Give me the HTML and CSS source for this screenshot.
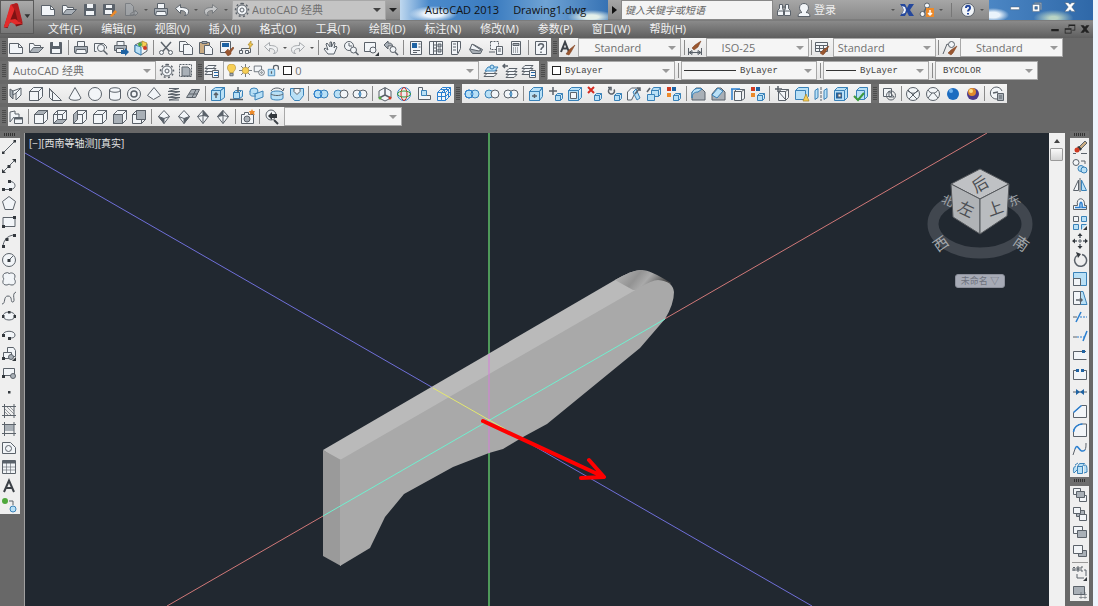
FILE: index.html
```html
<!DOCTYPE html>
<html lang="zh-CN">
<head>
<meta charset="utf-8">
<meta name="viewport" content="width=device-width, initial-scale=1">
<title>AutoCAD 2013 Drawing1.dwg</title>
<link rel="stylesheet" href="styles.css">
</head>
<body>
<svg class="sprite" aria-hidden="true">
<symbol id="new" viewBox="0 0 16 16"><path class="w" d="M1.5 3.5h9l4 4v6h-13z"/><path d="M10.500 3.500v4h4"/></symbol>
<symbol id="open" viewBox="0 0 16 16"><path class="w" d="M1.500 12.500v-9h4l1 2h6v2"/><path class="g" d="M1.500 12.500l4-5h10l-5 5z"/></symbol>
<symbol id="save" viewBox="0 0 16 16"><path class="d" d="M2.500 2.500h11v11h-11z"/><path class="w n" d="M5 2h6v4H5zM4 9h8v4H4z"/></symbol>
<symbol id="saveas" viewBox="0 0 16 16"><path class="d" d="M1.500 2.500h11v10h-11z"/><path class="w n" d="M4 3h6v3H4zM3 8h7v4H3z"/><path class="or" d="M8 14l5-6 2 2-5 5z"/></symbol>
<symbol id="export" viewBox="0 0 16 16"><path class="g" d="M2.500 1.500h5l3 3v9h-8z"/><path class="g" d="M7 14c0-3 2-4 5-4V8l3 3-3 3v-2c-2 0-3 0-5 2z"/></symbol>
<symbol id="print" viewBox="0 0 16 16"><path class="w" d="M4.500 1.500h7v5h-7z"/><path class="g" d="M1.500 6.500h13v6h-13z"/><path class="w" d="M3.500 9.500h9l1 4h-11z"/></symbol>
<symbol id="preview" viewBox="0 0 16 16"><path class="w" d="M3.500 11.500h-2v-8h9l3 3v2"/><circle class="w" cx="8" cy="8" r="3.500"/><path class="t" d="M10.500 10.500l4 4"/></symbol>
<symbol id="publish" viewBox="0 0 16 16"><path class="w" d="M4 1.500h7v4H4z"/><path class="g" d="M1.500 5.500h12v5h-12z"/><path class="w" d="M3.500 8.500h7v4h-7z"/><path class="bk" d="M8 10h4V8l4 4-4 4v-2H8z"/></symbol>
<symbol id="dwf" viewBox="0 0 16 16"><path class="w" d="M2 5l6-3 6 2v7l-6 4-6-3z"/><path class="b" d="M2 5l6 2v8l-6-3z"/><path class="yl" d="M9 1l5 2-1 3-4 1z"/><circle class="gn" cx="7" cy="4.500" r="2"/><circle class="rd" cx="12" cy="8" r="2"/></symbol>
<symbol id="cut" viewBox="0 0 16 16"><path class="t" d="M3 2l8 9M13 2L5 11"/><circle class="w" cx="3.500" cy="12.500" r="2"/><circle class="w" cx="12.500" cy="12.500" r="2"/></symbol>
<symbol id="copy" viewBox="0 0 16 16"><path class="w" d="M1.500 1.500h6l2 2v8h-8z"/><path class="w" d="M5.500 4.500h6l3 3v7h-9z"/></symbol>
<symbol id="paste" viewBox="0 0 16 16"><path class="tan" d="M1.500 2.500h10v11h-10z"/><path class="g" d="M4 1.500h5v2H4z"/><path class="w" d="M6.500 5.500h5l3 3v6h-8z"/></symbol>
<symbol id="match" viewBox="0 0 16 16"><path class="w" d="M2.500 1.500h10v11h-10z"/><path class="bk" d="M4 3h7v4H4z"/><path class="br" d="M7 12l3-3 1 2 4-4 1 1-3 4v2l-3 2z"/></symbol>
<symbol id="block" viewBox="0 0 16 16"><path d="M3.500 12.500v-4h9M8.500 12.500h4v-4"/><path class="w" d="M1.500 10.500h3v3h-3zM7.500 10.500h3v3h-3z"/><path class="yl" d="M13 1l-3 4h2l-1 4 4-5h-2z"/></symbol>
<symbol id="undo" viewBox="0 0 16 16"><path class="w" d="M1.500 6.500l5-4v3c5 0 8 1 8 4s-2 4-4 4c2-1 2-5-4-5v3z"/></symbol>
<symbol id="redo" viewBox="0 0 16 16"><path class="w" d="M14.500 6.500l-5-4v3c-5 0-8 1-8 4s2 4 4 4c-2-1-2-5 4-5v3z"/></symbol>
<symbol id="pan" viewBox="0 0 16 16"><path class="w" d="M5 14L1 9l1-1 3 2-2-6 1-1 3 4V2h1.500v5L11 2l1 1-1 5 2-2 1 1-3 7z"/></symbol>
<symbol id="zoomrt" viewBox="0 0 16 16"><circle class="w" cx="6" cy="6" r="4.500"/><path d="M6 3v3h3"/><circle class="w" cx="10.500" cy="10" r="3"/><path class="t" d="M12.500 12l3 3"/></symbol>
<symbol id="zoomwin" viewBox="0 0 16 16"><path class="w" d="M1.500 2.500h11v9h-11z"/><circle class="w" cx="10" cy="10" r="3"/><path class="k" d="M16 12v4h-4z"/></symbol>
<symbol id="zoomprev" viewBox="0 0 16 16"><path class="g" d="M1 5l4-4v2c4 0 4 1 5 4-2-2-3-1-5-1v3z"/><circle class="w" cx="10" cy="9.500" r="3"/><path class="t" d="M12 12l3 3"/></symbol>
<symbol id="props" viewBox="0 0 16 16"><path class="w" d="M2.500 1.500h11v13h-11z"/><path class="bk" d="M4 3h5v5H4z"/><path d="M10.500 4h2M10.500 7h2M5 10.500h7M5 12.500h4"/></symbol>
<symbol id="center" viewBox="0 0 16 16"><path class="w" d="M1.500 1.500h13v13h-13z"/><path d="M5.500 2v12M8.500 2v12M6 5h2M6 8h2M6 11h2"/><path class="g" d="M10 4h3v3h-3zM10 9h3v3h-3z"/></symbol>
<symbol id="palette" viewBox="0 0 16 16"><path class="w" d="M3.500 1.500h9v7l-3 6h-6z"/><path d="M9.500 2v11M5 4h3M5 7h3M5 10h3"/></symbol>
<symbol id="sheet" viewBox="0 0 16 16"><path class="g" d="M1.500 9.500l4-5 9 5-2 4h-8z"/><path class="w" d="M2 9l2-5 9 6-2 1z"/></symbol>
<symbol id="markup" viewBox="0 0 16 16"><path class="w" stroke-dasharray="2 1" d="M2.500 1.500h8v8h-8z"/><path class="w" d="M8.500 6.500h6v8h-6zM1 12h6"/><path d="M10 9h3M10 11h3"/></symbol>
<symbol id="calc" viewBox="0 0 16 16"><path class="w" d="M3.500 1.500h9v13h-9z"/><path class="g" d="M5 3.500h6v2H5z"/><path stroke-dasharray="1 1" d="M5 8h6M5 10h6M5 12h6"/></symbol>
<symbol id="help" viewBox="0 0 16 16"><path class="w" d="M2.500 1.500h11v13h-11z"/><path class="t" d="M5.500 6c0-3 5-3 5 0 0 2-2.500 1.500-2.500 4M8 11.500v1.500"/></symbol>
<symbol id="textstyle" viewBox="0 0 16 16"><path class="t2" d="M1 12L5 2l4 10M3 8.500h4"/><path class="br" d="M6 14l3-4 1-1 5-4-4 7-2 3z"/></symbol>
<symbol id="dimstyle" viewBox="0 0 16 16"><path d="M1.500 8v7M14.500 8v7M2 12.500h12M2 12.500l3-2v4zM14 12.500l-3-2v4z"/><path class="br" d="M5 8l3-3 6-4-3 6-4 3z"/></symbol>
<symbol id="tablestyle" viewBox="0 0 16 16"><path class="w" d="M1.500 2.500h12v9h-12z"/><path d="M2 5.500h11M2 8.500h11M5.500 5v6M9.500 5v6"/><path class="br" d="M6 13l3-3 6-4-4 7-2 2z"/></symbol>
<symbol id="leader" viewBox="0 0 16 16"><path d="M1 14L5 4l4 2"/><circle class="w" cx="9.500" cy="4.500" r="3"/><path class="br" d="M6 13l3-3 6-4-4 7-2 2z"/></symbol>
<symbol id="gear" viewBox="0 0 16 16"><circle class="w" cx="8" cy="8" r="5"/><circle cx="8" cy="8" r="2"/><path class="t" stroke-dasharray="2 2.300" d="M8 1.500a6.500 6.500 0 1 1-.01 0"/></symbol>
<symbol id="wssave" viewBox="0 0 16 16"><path stroke-dasharray="2 1" d="M1.500 1.500h12v12h-12z"/><path class="g" d="M4 4h6l2 2v7H4z"/></symbol>
<symbol id="layers" viewBox="0 0 16 16"><path class="w" d="M1 11.500l3-3h8l-3 3zM1 8.500l3-3h8l-3 3zM1 5.500l3-3h8l-3 3z"/><path class="w" d="M8.500 7.500h6v7h-6z"/><path class="bk" d="M10 9h4v1h-4zM10 12h4v1h-4z"/></symbol>
<symbol id="laycur" viewBox="0 0 16 16"><path class="w" d="M1 13.500l3-3h10l-3 3zM1 10.500l3-3h10l-3 3z"/><path class="b" d="M2 8l3-4h10l-3 4z"/><circle class="b" cx="9" cy="4" r="2"/></symbol>
<symbol id="layprev" viewBox="0 0 16 16"><path class="w" d="M4 14.500l3-3h8l-3 3zM4 11.500l3-3h8l-3 3zM4 8.500l3-3h8l-3 3z"/><path class="t" d="M6 3H1M3 1L1 3l2 2"/></symbol>
<symbol id="bulb" viewBox="0 0 16 16"><path class="yl" d="M6 11c0-2-3-3-3-6a5 5 0 0 1 10 0c0 3-3 4-3 6z"/><path class="g" d="M6 11.500h4v3H6z"/></symbol>
<symbol id="sun" viewBox="0 0 16 16"><path d="M8 0v16M0 8h16M2.500 2.500l11 11M13.500 2.500l-11 11"/><circle class="yl" cx="8" cy="8" r="4"/></symbol>
<symbol id="freeze" viewBox="0 0 16 16"><path class="w" d="M1.500 2.500h9v7h-9z"/><circle class="w" cx="10.500" cy="10.500" r="3.500"/><circle cx="10.500" cy="10.500" r="1"/></symbol>
<symbol id="lock" viewBox="0 0 16 16"><path class="b" d="M1.500 6.500h8v8h-8z"/><path class="t" d="M8 6V4c0-3 6-3 6 0v3M5.500 9v3"/></symbol>
<symbol id="polysolid" viewBox="0 0 16 16"><path class="g" d="M2 3l3 2v8l-3-3z"/><path class="w" d="M5 5l8-3v7l-5 5V7L5 9zM8 7l5-5"/></symbol>
<symbol id="box" viewBox="0 0 16 16"><path class="w" d="M1.500 5.500h9v9h-9zM1.500 5.500l4-4h9l-4 4zM10.500 5.500l4-4v9l-4 4z"/></symbol>
<symbol id="wedge" viewBox="0 0 16 16"><path class="w" d="M2.500 2.500v9l3 3h9z"/><path d="M2.500 2.500l3 4v8"/></symbol>
<symbol id="cone" viewBox="0 0 16 16"><path class="w" d="M8 1.500L2 12c1 3 11 3 12 0z"/></symbol>
<symbol id="sphere" viewBox="0 0 16 16"><circle class="w" cx="8" cy="8" r="6.500"/></symbol>
<symbol id="cylinder" viewBox="0 0 16 16"><path class="w" d="M2.500 4v8c0 3 11 3 11 0V4c0-3-11-3-11 0c0 3 11 3 11 0"/></symbol>
<symbol id="torus" viewBox="0 0 16 16"><circle class="w" cx="8" cy="8" r="6.500"/><circle class="t" cx="8" cy="8" r="3"/></symbol>
<symbol id="pyramid" viewBox="0 0 16 16"><path class="w" d="M8 1.500l-6.500 8 6 4 7-4z"/></symbol>
<symbol id="helix" viewBox="0 0 16 16"><path d="M3 2.500h10L2 5.500h12L2 8.500h12L2 11.500h12L3 14h10"/></symbol>
<symbol id="plane" viewBox="0 0 16 16"><path class="g" d="M1.500 11.500l5-8h8l-4 8z"/><path d="M4 8h8.500M7 11.500l4-8"/></symbol>
<symbol id="extrude" viewBox="0 0 16 16"><path class="b" d="M1.500 4.500h9v10h-9zM1.500 4.500l4-3h9l-4 3zM10.500 4.500l4-3v10l-4 3z"/><path class="t" d="M6 12V7M4 9l2-2 2 2"/></symbol>
<symbol id="presspull" viewBox="0 0 16 16"><path class="b" d="M4.500 6.500h6v6h-6zM4.500 6.500l2-2h6l-2 2zM10.500 12.500l3-2v-6"/><path class="t" d="M9 1v5M1 13.500h13"/></symbol>
<symbol id="sweep" viewBox="0 0 16 16"><ellipse class="b" cx="5" cy="5" rx="4" ry="3"/><path class="b" d="M6 8l8-3v6l-8 3zM1 5v3c0 3 5 2 6 2"/></symbol>
<symbol id="revolve" viewBox="0 0 16 16"><path class="b" d="M2 6.500c2-2 10-2 12 0v6c-2 2-10 2-12 0z"/><path d="M2 5c2-4 10-4 12 0M12 3l2 2 1-3M2 8c3 2 9 2 12 0"/></symbol>
<symbol id="loft" viewBox="0 0 16 16"><path class="b" d="M1.500 2.500h13v7l-4 5h-5l-4-5z"/><path class="w" d="M5 2.500v3l3 3 3-3v-3z"/></symbol>
<symbol id="union" viewBox="0 0 16 16"><circle class="b" cx="5" cy="8" r="4"/><circle class="b" cx="11" cy="8" r="4"/><circle class="nb" cx="5" cy="8" r="4"/></symbol>
<symbol id="subtract" viewBox="0 0 16 16"><circle class="b" cx="5" cy="8" r="4"/><circle class="w" cx="11" cy="8" r="4"/></symbol>
<symbol id="intersect" viewBox="0 0 16 16"><circle class="w" cx="5" cy="8" r="4"/><circle class="w" cx="11" cy="8" r="4"/><path class="b" d="M8 5.500a4 4 0 0 1 0 5a4 4 0 0 1 0-5"/></symbol>
<symbol id="gizmo" viewBox="0 0 16 16"><path class="w" d="M2 5l6-3.500L14 5v7l-6 3-6-3z"/><path class="t" d="M8 2v7M8 9l-6 3M8 9l6 3"/><circle class="rd" cx="13" cy="12" r="1.500"/><circle class="gn" cx="3" cy="12" r="1.500"/></symbol>
<symbol id="gizrot" viewBox="0 0 16 16"><circle class="nb" cx="8" cy="8" r="6.500"/><ellipse class="red" cx="8" cy="8" rx="3" ry="6.500"/><ellipse class="grn" cx="8" cy="8" rx="6.500" ry="3"/></symbol>
<symbol id="align3" viewBox="0 0 16 16"><path class="w" d="M2.500 1.500v12h12v-4h-8v-8z"/><path class="b" d="M5.500 4.500h5v5h-5z"/></symbol>
<symbol id="array3" viewBox="0 0 16 16"><path class="w nb" d="M1.500 6.500h4v4h-4zM5.500 6.500h4v4h-4zM1.500 10.500h4v4h-4zM5.500 10.500h4v4h-4zM4.500 3.500h4v3M8.500 3.500h4v4M1.500 6.500l3-3M5.500 6.500l3-3M9.500 6.500l3-3M9.500 10.500l3-3M9.500 14.500l3-3v-4M6.500 1.500h4v2M10.500 1.500h4v4l-2 2M4.500 3.500l2-2M12.500 3.500l2-2M12.500 11.500l2-2v-4"/></symbol>
<symbol id="plusbox" viewBox="0 0 16 16"><path class="b" d="M1.500 5.500h10v9h-10zM1.500 5.500l4-4h9l-3 4zM11.500 5.500l3-4v9l-3 4z"/><path class="t" d="M4 10h5M6.500 8v4"/></symbol>
<symbol id="movef" viewBox="0 0 16 16"><path class="t" d="M5 1v8M1 5h8"/><path class="b" d="M7.500 9.500h5v5h-5zM7.500 9.500l2-2h5l-2 2zM12.500 14.500l2-2v-5"/></symbol>
<symbol id="offsetf" viewBox="0 0 16 16"><path class="b" d="M1.500 4.500h10v10h-10zM1.500 4.500l3-3h10l-3 3zM11.500 14.500l3-3v-10"/><path class="w" d="M3.500 6.500h6v6h-6z"/></symbol>
<symbol id="delf" viewBox="0 0 16 16"><path class="red t2" d="M1 1l6 6M7 1L1 7"/><path class="b" d="M7.500 9.500h5v5h-5zM7.500 9.500l2-2h5l-2 2zM12.500 14.500l2-2v-5"/></symbol>
<symbol id="rotf" viewBox="0 0 16 16"><path class="t" d="M3 2.500a3 3 0 1 0 4 1M1 1.500h3v3"/><path class="b" d="M7.500 9.500h5v5h-5zM7.500 9.500l2-2h5l-2 2zM12.500 14.500l2-2v-5"/></symbol>
<symbol id="taperf" viewBox="0 0 16 16"><path class="w" d="M1.500 14V6l4-4h6l-6 12z"/><path class="b" d="M7 6l3-3 4 9-3 2z"/><path class="t" d="M9 8l5-6M11 2h3v3"/></symbol>
<symbol id="copyf" viewBox="0 0 16 16"><path class="b" d="M5.500 4.500h7v6h-7zM5.500 4.500l2-3h7l-2 3zM12.500 10.500l2-2v-7"/><path class="b" d="M1.500 8.500h7v6h-7z"/><path class="t" d="M1 6l3-4"/></symbol>
<symbol id="colorf" viewBox="0 0 16 16"><path class="rd" d="M1 1h4v4H1z"/><path class="bk" d="M6 1h4v4H6z"/><path class="or" d="M1 7h4v4H1z"/><path class="b" d="M7.500 9.500h5v5h-5zM7.500 9.500l2-2h5l-2 2zM12.500 14.500l2-2v-5"/></symbol>
<symbol id="fillete" viewBox="0 0 16 16"><path class="g" d="M2 6l4-4h5l4 4v8H2z"/><path class="b" d="M2 12c0-4 2-6 6-6l4-3c-6-2-11 1-10 7z"/></symbol>
<symbol id="chamfere" viewBox="0 0 16 16"><path class="g" d="M2 8l5-6h4l4 4v8H2z"/><path class="b" d="M2 9l6-7 5 3-6 7z"/></symbol>
<symbol id="copye" viewBox="0 0 16 16"><path class="w" d="M4.500 5.500h7v9h-7zM4.500 5.500l2-2h8l-3 2M11.500 14.500l3-2v-9"/><path class="nb t" d="M1 3h9M2 3v11"/></symbol>
<symbol id="imprint" viewBox="0 0 16 16"><path class="w" d="M4.500 5.500h7v9h-7zM4.500 5.500l3-2h7l-3 2M11.500 14.500l3-3v-8"/><path class="t" d="M1 3h7M4 0v6"/><path d="M4 5l7 8"/></symbol>
<symbol id="clean" viewBox="0 0 16 16"><path class="b" d="M1.500 4.500l3-3h10v9l-3 3h-10zM1.500 4.500h10v9"/><path class="yl" d="M9 15l3-7 3 7z"/></symbol>
<symbol id="separate" viewBox="0 0 16 16"><path class="b" d="M2 4.500l3-2v9l-3 2zM11 4.500l3-2v9l-3 2z"/><path stroke-dasharray="3 1" d="M8 1v14"/></symbol>
<symbol id="shell" viewBox="0 0 16 16"><path class="b" d="M1.500 4.500l3-3h10v10l-3 3h-10zM1.500 4.500h10v10M11.500 4.500l3-3"/><path class="bk" d="M3 6.500h6v6H3z"/><path class="w" d="M5 8h3v3H5z"/></symbol>
<symbol id="check" viewBox="0 0 16 16"><path class="b" d="M3.500 4.500l3-3h8v9l-3 3h-8zM3.500 4.500h8v9"/><path class="grn t2" d="M1 10l4 4 6-7"/></symbol>
<symbol id="wf2d" viewBox="0 0 16 16"><path class="w" d="M2.500 2.500h8v8h-8z"/><circle cx="10" cy="9.500" r="4.500"/><path d="M8 5l5 6H8z"/></symbol>
<symbol id="wire" viewBox="0 0 16 16"><circle class="w" cx="8" cy="8" r="6.500"/><path d="M3 4l9 9M13 4l-9 9M3 5c4 3 6 3 10 0"/></symbol>
<symbol id="hidden" viewBox="0 0 16 16"><circle class="w" cx="8" cy="8" r="6.500"/><path d="M3 4c2 4 8 4 10 0M7 7l-4 5M9 7l4 5"/></symbol>
<symbol id="realistic" viewBox="0 0 16 16"><circle class="rb" cx="8" cy="8" r="6"/><circle class="hi" cx="6" cy="5" r="2"/></symbol>
<symbol id="conceptual" viewBox="0 0 16 16"><circle class="cp" cx="8" cy="8" r="6"/><circle class="co" cx="7" cy="6" r="4"/><circle class="hy" cx="6" cy="5" r="2"/></symbol>
<symbol id="vsmgr" viewBox="0 0 16 16"><path class="w" d="M13 5a6 6 0 1 0-5 8"/><path class="t" d="M4 7l5-1"/><path class="g" d="M8.500 7.500h6v7h-6z"/><path d="M10 10h3M10 12h3"/></symbol>
<symbol id="named" viewBox="0 0 16 16"><path class="w" d="M2 13V3l5-1v3h4v3"/><path d="M2 13l4-5"/><path class="w" d="M6.500 8.500h8v6h-8z"/><path class="d" d="M7 9h7v1H7z"/></symbol>
<symbol id="vtop" viewBox="0 0 16 16"><use href="#box"/><path class="g" d="M1.500 5.500l4-4h9l-4 4z"/></symbol>
<symbol id="vbottom" viewBox="0 0 16 16"><use href="#box"/><path class="g" d="M1.500 14.500l4-4h9l-4 4z"/><path d="M5.500 1.500v9"/></symbol>
<symbol id="vleft" viewBox="0 0 16 16"><use href="#box"/><path class="g" d="M1.500 5.500l4-4v9l-4 4z"/></symbol>
<symbol id="vfront" viewBox="0 0 16 16"><use href="#box"/><path class="g" d="M1.500 5.500h9v9h-9z"/></symbol>
<symbol id="vback" viewBox="0 0 16 16"><use href="#box"/><path class="g" d="M5.500 1.500h9v9h-9z"/></symbol>
<symbol id="iso1" viewBox="0 0 16 16"><path class="w" d="M8 1.500l5.500 6L8 14.500l-5.500-7z"/><path class="d" d="M2.500 7.500L8 9.500v5z"/><path d="M8 9.500l5.500-2"/></symbol>
<symbol id="iso2" viewBox="0 0 16 16"><path class="w" d="M8 1.500l5.500 6L8 14.500l-5.500-7z"/><path class="d" d="M13.500 7.500L8 9.500v5z"/><path d="M8 9.500l-5.500-2"/></symbol>
<symbol id="iso3" viewBox="0 0 16 16"><path class="w" d="M8 1.500l5.500 6L8 14.500l-5.500-7z"/><path class="d" d="M13.500 7.500L8 6.500v-5z"/><path d="M8 6.500v8M8 6.500l-5.500 1"/></symbol>
<symbol id="iso4" viewBox="0 0 16 16"><path class="w" d="M8 1.500l5.500 6L8 14.500l-5.500-7z"/><path class="d" d="M2.500 7.500L8 6.500v-5z"/><path d="M8 6.500v8M8 6.500l5.500 1"/></symbol>
<symbol id="camera" viewBox="0 0 16 16"><path class="w" d="M1.500 5.500h3v-2h4v2h5v9h-12z"/><circle class="g" cx="7" cy="10" r="3"/><path class="or" d="M12 0l1 2 2 0-1 2 1 2-3-1-2 1v-2l-1-2h2z"/></symbol>
<symbol id="viewprev" viewBox="0 0 16 16"><circle class="w" cx="7" cy="6" r="5"/><path class="k" d="M4 7l4-4v2h5v4H8v2z"/><path class="t2" d="M10 11l4 4"/></symbol>
<symbol id="line" viewBox="0 0 16 16"><path d="M2 14L14 2"/><path class="k" d="M1 12.500h2.500V15H1zM12.500 1H15v2.500h-2.500z"/></symbol>
<symbol id="xline" viewBox="0 0 16 16"><path d="M2 14L14 2"/><path class="k" d="M1 15v-4l4 4zM15 1v4l-4-4zM6.500 7h3v3h-3z"/></symbol>
<symbol id="pline" viewBox="0 0 16 16"><path class="w" d="M2 12.500h8c6-1 5-8-1-8"/><path class="k" d="M1 11h3v3H1zM8 11h3v3H8zM7 3h3v3H7z"/></symbol>
<symbol id="polygon" viewBox="0 0 16 16"><path class="w" d="M8 1.500l6.500 5-2.500 8H4l-2.500-8z"/></symbol>
<symbol id="rect" viewBox="0 0 16 16"><path class="w" d="M2 3.500h12v9H2z"/><path class="k" d="M1 11h3v3H1zM12 2h3v3h-3z"/></symbol>
<symbol id="arc" viewBox="0 0 16 16"><path d="M2 14C2 8 6 2 14 2"/><path class="k" d="M1 12h3v3H1zM4.500 5h3v3h-3zM12 1h3v3h-3z"/></symbol>
<symbol id="circle" viewBox="0 0 16 16"><circle class="w" cx="8" cy="8" r="6.500"/><path d="M8 8l4-4"/><path class="k" d="M6.500 7h3v3h-3z"/></symbol>
<symbol id="cloud" viewBox="0 0 16 16"><path class="w" d="M5 2c2-1 3 0 3 1 1-2 6-1 6 2 0 2-1 3-1 3 2 1 2 6-2 6-2 0-3-1-3-1-2 2-7 1-6-3 0-1 1-2 1-2C1 6 2 2 5 2z"/></symbol>
<symbol id="spline" viewBox="0 0 16 16"><path d="M1 14c4 0 1-8 6-8s2 7 5 6S10 4 15 2"/></symbol>
<symbol id="ellipse" viewBox="0 0 16 16"><ellipse class="w" cx="8" cy="8" rx="6" ry="4"/><path class="k" d="M1 7h2.500v3H1zM12.500 7H15v3h-2.500zM7 3h2.500v2.500H7z"/></symbol>
<symbol id="earc" viewBox="0 0 16 16"><path class="w" d="M2 8c0-5 12-5 12 0 0 3-3 3-6 3"/><path class="k" d="M1 7h3v3H1zM7 10h3v3H7z"/></symbol>
<symbol id="insert" viewBox="0 0 16 16"><path class="w" d="M6.500 1.500h6l2 3v6h-8z"/><path class="w" d="M2.500 6.500h8v6h-8z"/><circle class="g" cx="10" cy="11" r="2.500"/><path class="k" d="M15 11v4h-4zM1 11h3v3H1z"/></symbol>
<symbol id="mkblock" viewBox="0 0 16 16"><path class="w" d="M2.500 3.500h11v7h-11z"/><circle class="g" cx="12" cy="11" r="2.500"/><path class="k" d="M1 10h3v3H1z"/></symbol>
<symbol id="point" viewBox="0 0 16 16"><path class="k" d="M7 7h2.500v2.500H7z"/></symbol>
<symbol id="hatch" viewBox="0 0 16 16"><path d="M3.500 1v14M13 1v14M1 3.500h14M1 12.500h14"/><path class="thin" d="M4 6l6 6M4 9l3 3M6 4l7 7M9 4l4 4"/></symbol>
<symbol id="gradient" viewBox="0 0 16 16"><path class="g n" d="M4 4h9v6H4z"/><path d="M3.500 1v14M13 1v14M1 3.500h14M1 12.500h14"/></symbol>
<symbol id="region" viewBox="0 0 16 16"><path class="w" d="M1.500 2.500h8l5 5v6h-13z"/><circle class="w" cx="7.500" cy="8.500" r="3"/></symbol>
<symbol id="table" viewBox="0 0 16 16"><path class="w" d="M1.500 1.500h13v13h-13z"/><path class="d" d="M2 2h12v2H2z"/><path class="thin" d="M2 8h12M2 11h12M5.500 4v10M9.500 4v10"/></symbol>
<symbol id="mtext" viewBox="0 0 16 16"><path class="t2" d="M3 14L8 2.500 13 14M5 10h6"/></symbol>
<symbol id="addsel" viewBox="0 0 16 16"><circle class="gn" cx="4" cy="4" r="3"/><circle class="b" cx="12" cy="12" r="3"/><path d="M8 4h4v4"/></symbol>
<symbol id="erase" viewBox="0 0 16 16"><path class="tan" d="M7 8l6-6 2 2-6 6z"/><path class="k" d="M5 8l2-1 3 3-2 2z"/><circle class="rd" cx="5" cy="11" r="2.500"/><path d="M1 14.500h3M9 14.500h6"/></symbol>
<symbol id="copyobj" viewBox="0 0 16 16"><circle class="w" cx="4" cy="4.500" r="3"/><circle class="b" cx="9" cy="10.500" r="3"/><circle class="b" cx="12" cy="12" r="3"/><path d="M9 3h4v3"/></symbol>
<symbol id="mirror" viewBox="0 0 16 16"><path class="w" d="M6.500 3v10.500h-5z"/><path class="b" d="M9.500 3v10.500h5z"/><path d="M8 1v14"/></symbol>
<symbol id="offset" viewBox="0 0 16 16"><path class="w" d="M1.500 13.500v-4h4c-2-9 8-9 7 0h2v4z"/><path class="nb t" d="M3 11.500h5c-1-7 3-7 2 0h4"/></symbol>
<symbol id="array" viewBox="0 0 16 16"><path class="w" d="M1.500 1.500h5v5h-5z"/><path class="b" d="M9.500 1.500h5v5h-5zM1.500 9.500h5v5h-5zM9.500 14.500v-5h5"/><path class="k" d="M15 11v4h-4z"/></symbol>
<symbol id="move" viewBox="0 0 16 16"><path class="t" d="M8 2v3M8 11v3M2 8h3M11 8h3"/><path class="k" d="M8 0l2.500 3h-5zM8 16l2.500-3h-5zM0 8l3-2.500v5zM16 8l-3-2.500v5z"/><path class="w" d="M7 7h2v2H7z"/></symbol>
<symbol id="rotate" viewBox="0 0 16 16"><path class="t" d="M5 3.500a6 6 0 1 0 5-1"/><path class="k" d="M4 0l5 2-3 4z"/></symbol>
<symbol id="scale" viewBox="0 0 16 16"><path class="b" d="M1.500 1.500h13v13h-13z"/><path class="w" d="M1.500 7.500h7v7h-7z"/></symbol>
<symbol id="stretch" viewBox="0 0 16 16"><path class="b" d="M8 1.500h3l4 13H8z"/><path class="w" d="M1.500 1.500h7v13h-7z"/><path class="t" d="M4 10h6M8 8l2 2-2 2"/></symbol>
<symbol id="trim" viewBox="0 0 16 16"><path d="M1 8h4"/><path class="nb t" d="M4 13l5-10"/><path class="nb" stroke-dasharray="2 1" d="M8 8h7"/></symbol>
<symbol id="extend" viewBox="0 0 16 16"><path d="M1 9h4"/><path class="nb t" d="M11 13l4-10"/><path class="nb" stroke-dasharray="2 1" d="M5 9h7"/></symbol>
<symbol id="breakpt" viewBox="0 0 16 16"><path class="w" d="M14 4.500H1.500v8h13"/><path class="bk" d="M10 3h3v3h-3z"/></symbol>
<symbol id="break" viewBox="0 0 16 16"><path class="w" d="M4 4.500H1.500v9h13v-9H12"/><path class="bk" d="M4 3h3v3H4zM9 3h3v3H9z"/></symbol>
<symbol id="join" viewBox="0 0 16 16"><path d="M1 8h14"/><path class="bk" d="M4 5l4 3-4 3zM12 5L8 8l4 3z"/></symbol>
<symbol id="chamfer" viewBox="0 0 16 16"><path class="w" d="M1.500 14.500v-5l8-7h5v12z"/><path class="nb t" d="M1.500 9.500l8-7"/></symbol>
<symbol id="fillet" viewBox="0 0 16 16"><path class="w" d="M1.500 14.500V10c0-4 4-8 9-8h4v12.500z"/><path class="nb t" d="M1.500 10c0-4 4-8 9-8"/></symbol>
<symbol id="blend" viewBox="0 0 16 16"><path d="M1 14c1-2 1-4 2-6M13 9c1-2 1-4 1-7"/><path class="nb t" d="M3 8c3-8 4 6 10 1"/></symbol>
<symbol id="explode" viewBox="0 0 16 16"><path class="b" d="M5.500 6.500h5v7h-5zM5.500 6.500l2-3h5l-2 3zM4 6c-3 0-3 6-2 7l3-3M12 6c3-3 3 2 3 6l-3 1M3 5l3-2"/></symbol>
<symbol id="front" viewBox="0 0 16 16"><path class="w" d="M1.500 1.500h7v6h-7zM7.500 8.500h7v6h-7z"/><path class="g" d="M4.500 4.500h8v6h-8z"/></symbol>
<symbol id="back" viewBox="0 0 16 16"><path class="g" d="M4.500 4.500h8v6h-8z"/><path class="w" d="M1.500 1.500h7v6h-7zM7.500 8.500h7v6h-7z"/></symbol>
<symbol id="above" viewBox="0 0 16 16"><path class="w" d="M1.500 2.500h9v7h-9z"/><path class="g" d="M5.500 6.500h9v7h-9z"/></symbol>
<symbol id="under" viewBox="0 0 16 16"><path class="g" d="M6.500 7.500h8v6h-8z"/><path class="w" d="M1.500 2.500h9v8h-9z"/></symbol>
<symbol id="abctext" viewBox="0 0 16 16"><path d="M1 6V3l1-1 1 1v3M1 5h2M5 2v4h2V4H5h2V2zM11 2H9v4h2"/><path d="M12 5h2v6M5 9v4h7"/><path class="k" d="M15 12v4h-4z"/></symbol>
<symbol id="hatchback" viewBox="0 0 16 16"><path class="g" d="M1.500 2.500h11v8h-11z"/><path class="thin" d="M9 8v7M13 8v7M7 10.500h8M7 13.500h8"/></symbol>
<symbol id="binoc" viewBox="0 0 16 16"><path class="w" d="M3.500 2.500h3v4l1 2v5h-6v-5l2-2zM9.500 2.500h3v4l2 2v5h-6v-5l1-2z"/><path d="M2 9h5M9 9h5M7 5h2"/></symbol>
<symbol id="user" viewBox="0 0 16 16"><path class="w" d="M2 14.500c0-3 2-4 4-4-4-3-3-9 2-9s6 6 2 9c2 0 4 1 4 4z"/></symbol>
<symbol id="exchange" viewBox="0 0 16 16"><path class="ex" d="M1 2h5l2 4 2-4h5l-4 6 4 6h-5l-2-4-2 4H1l4-6z"/><path class="w n" d="M3 4l3 1 1 3-1 3-3 1 2-4z"/></symbol>
<symbol id="connect" viewBox="0 0 16 16"><path class="t" d="M4 12l4-8"/><circle class="w" cx="8" cy="3.500" r="2.500"/><circle class="w" cx="3.500" cy="12" r="2.500"/><path class="or" d="M7 6h8v9H7z"/><path class="wt" d="M11 8v5M9 11l2 2 2-2"/></symbol>
<symbol id="qmark" viewBox="0 0 16 16"><circle class="w" cx="8" cy="8" r="6.500"/><path class="ex2" d="M6 6c0-3 4-3 4 0 0 1.500-2 2-2 3.500M8 11v1.500"/></symbol>
<symbol id="min" viewBox="0 0 16 16"><path d="M3 8h10v3H3z"/></symbol>
<symbol id="max" viewBox="0 0 16 16"><path fill-rule="evenodd" d="M3 5h8v8H3zM5.500 7.500v3h3v-3zM5 3h8v8h-1V4H5z"/></symbol>
<symbol id="restore" viewBox="0 0 16 16"><path fill-rule="evenodd" d="M1 7h9v7H1zM2 9v4h7V9zM6 2h9v8h-4V9h3V4H7v2H6z"/></symbol>
<symbol id="close" viewBox="0 0 16 16"><path d="M2 3h4l2 2 2-2h4L10 8l4 5h-4l-2-2-2 2H2l4-5z"/></symbol>
</svg>

<div class="app">
<header class="header">
  <button class="logo" aria-label="应用程序菜单">
    <svg viewBox="0 0 34 34" aria-hidden="true"><path class="logo-dark" d="M3 28L11 4l6-1 6 22-7 2-2-5-5 1-2 6z"/><path class="logo-red" d="M3 28L10 4l6-1-2 7-4 10 5-1 8 5-8 1-5-3-3 6z"/><path class="logo-lite" d="M11 4l5-2 2 1 5 20-5-1-3-12z"/><path class="logo-arrow" d="M25 14h6l-3 4z"/></svg>
  </button>
  <div class="header-main">
    <div class="titlebar">
      <div class="quick">
        <button class="tool" aria-label="新建"><svg><use href="#new"/></svg></button>
        <button class="tool" aria-label="打开"><svg><use href="#open"/></svg></button>
        <button class="tool" aria-label="保存"><svg><use href="#save"/></svg></button>
        <button class="tool" aria-label="另存为"><svg><use href="#saveas"/></svg></button>
        <button class="tool dim" aria-label="输出"><svg><use href="#export"/></svg></button>
        <i class="dot"></i>
        <button class="tool" aria-label="打印"><svg><use href="#print"/></svg></button>
        <button class="tool" aria-label="放弃"><svg><use href="#undo"/></svg></button>
        <i class="dot"></i>
        <button class="tool dim" aria-label="重做"><svg><use href="#redo"/></svg></button>
        <i class="dot"></i>
      </div>
      <div class="combo title-combo"><svg class="ic" aria-hidden="true"><use href="#gear"/></svg><select aria-label="工作空间"><option>AutoCAD 经典</option></select></div>
      <button class="more" aria-label="自定义"><i class="caret"></i></button>
      <h1 class="title aero"><span>AutoCAD 2013</span><span>Drawing1.dwg</span></h1>
      <button class="more side" aria-label="展开"><i class="caret"></i></button>
      <input class="search" type="text" placeholder="键入关键字或短语" aria-label="搜索">
      <div class="info">
        <button class="tool" aria-label="搜索"><svg><use href="#binoc"/></svg></button>
        <button class="login"><svg class="ic" aria-hidden="true"><use href="#user"/></svg>登录</button>
        <span class="grow"></span>
        <i class="dot"></i>
        <button class="tool" aria-label="Exchange"><svg><use href="#exchange"/></svg></button>
        <button class="tool" aria-label="连接"><svg><use href="#connect"/></svg></button>
        <i class="dot"></i>
        <i class="line"></i>
        <button class="tool" aria-label="帮助"><svg><use href="#qmark"/></svg></button>
        <i class="dot"></i>
      </div>
      <div class="window aero">
        <button class="win" aria-label="最小化"><svg><use href="#min"/></svg></button>
        <button class="win" aria-label="还原"><svg><use href="#max"/></svg></button>
        <button class="win wide" aria-label="关闭"><svg><use href="#close"/></svg></button>
      </div>
    </div>
    <nav class="menubar" aria-label="菜单">
      <a href="#file">文件(F)</a><a href="#edit">编辑(E)</a><a href="#view">视图(V)</a><a href="#ins">插入(I)</a><a href="#format">格式(O)</a><a href="#tools">工具(T)</a><a href="#draw">绘图(D)</a><a href="#dim">标注(N)</a><a href="#modify">修改(M)</a><a href="#param">参数(P)</a><a href="#win">窗口(W)</a><a href="#helpmenu">帮助(H)</a>
      <span class="grow"></span>
      <div class="docs">
        <button class="doc" aria-label="最小化图形"><svg><use href="#min"/></svg></button>
        <button class="doc" aria-label="还原图形"><svg><use href="#restore"/></svg></button>
        <button class="doc" aria-label="关闭图形"><svg><use href="#close"/></svg></button>
      </div>
    </nav>
  </div>
</header>

<div class="toolbars">
  <div class="row">
    <div class="bar bar-std">
      <button class="tool" aria-label="新建"><svg><use href="#new"/></svg></button>
      <button class="tool" aria-label="打开"><svg><use href="#open"/></svg></button>
      <button class="tool" aria-label="保存"><svg><use href="#save"/></svg></button>
      <i class="sep"></i>
      <button class="tool" aria-label="打印"><svg><use href="#print"/></svg></button>
      <button class="tool" aria-label="打印预览"><svg><use href="#preview"/></svg></button>
      <button class="tool" aria-label="发布"><svg><use href="#publish"/></svg></button>
      <button class="tool" aria-label="三维DWF"><svg><use href="#dwf"/></svg></button>
      <i class="sep"></i>
      <button class="tool" aria-label="剪切"><svg><use href="#cut"/></svg></button>
      <button class="tool" aria-label="复制"><svg><use href="#copy"/></svg></button>
      <button class="tool" aria-label="粘贴"><svg><use href="#paste"/></svg></button>
      <button class="tool" aria-label="特性匹配"><svg><use href="#match"/></svg></button>
      <button class="tool" aria-label="块编辑器"><svg><use href="#block"/></svg></button>
      <i class="sep"></i>
      <button class="tool dim" aria-label="放弃"><svg><use href="#undo"/></svg></button>
      <i class="dot"></i>
      <button class="tool dim" aria-label="重做"><svg><use href="#redo"/></svg></button>
      <i class="dot"></i>
      <i class="sep"></i>
      <button class="tool" aria-label="平移"><svg><use href="#pan"/></svg></button>
      <button class="tool" aria-label="实时缩放"><svg><use href="#zoomrt"/></svg></button>
      <button class="tool" aria-label="窗口缩放"><svg><use href="#zoomwin"/></svg></button>
      <button class="tool" aria-label="缩放上一个"><svg><use href="#zoomprev"/></svg></button>
      <i class="sep"></i>
      <button class="tool" aria-label="特性"><svg><use href="#props"/></svg></button>
      <button class="tool" aria-label="设计中心"><svg><use href="#center"/></svg></button>
      <button class="tool" aria-label="工具选项板"><svg><use href="#palette"/></svg></button>
      <button class="tool" aria-label="图纸集"><svg><use href="#sheet"/></svg></button>
      <button class="tool" aria-label="标记集"><svg><use href="#markup"/></svg></button>
      <button class="tool" aria-label="计算器"><svg><use href="#calc"/></svg></button>
      <i class="sep"></i>
      <button class="tool" aria-label="帮助"><svg><use href="#help"/></svg></button>
    </div>
    <div class="bar bar-styles">
      <button class="tool" aria-label="文字样式"><svg><use href="#textstyle"/></svg></button>
      <div class="combo w103 pad"><select aria-label="文字样式"><option>Standard</option></select></div>
      <i class="sep"></i>
      <button class="tool" aria-label="标注样式"><svg><use href="#dimstyle"/></svg></button>
      <div class="combo w103 pad"><select aria-label="标注样式"><option>ISO-25</option></select></div>
      <i class="sep"></i>
      <button class="tool" aria-label="表格样式"><svg><use href="#tablestyle"/></svg></button>
      <div class="combo w103"><select aria-label="表格样式"><option>Standard</option></select></div>
      <i class="sep"></i>
      <button class="tool" aria-label="引线样式"><svg><use href="#leader"/></svg></button>
      <div class="combo w103 pad"><select aria-label="引线样式"><option>Standard</option></select></div>
    </div>
  </div>
  <div class="row">
    <div class="bar bar-ws">
      <div class="combo w148"><select aria-label="工作空间"><option>AutoCAD 经典</option></select></div>
      <button class="tool" aria-label="工作空间设置"><svg><use href="#gear"/></svg></button>
      <button class="tool" aria-label="保存工作空间"><svg><use href="#wssave"/></svg></button>
    </div>
    <div class="bar bar-layer">
      <button class="tool" aria-label="图层特性"><svg><use href="#layers"/></svg></button>
      <div class="combo layer w256"><svg class="ic mini" aria-hidden="true"><use href="#bulb"/></svg><svg class="ic mini" aria-hidden="true"><use href="#sun"/></svg><svg class="ic mini" aria-hidden="true"><use href="#freeze"/></svg><svg class="ic mini" aria-hidden="true"><use href="#lock"/></svg><i class="swatch"></i><select aria-label="图层"><option>0</option></select></div>
      <button class="tool" aria-label="置为当前"><svg><use href="#laycur"/></svg></button>
      <button class="tool" aria-label="上一个图层"><svg><use href="#layprev"/></svg></button>
      <button class="tool" aria-label="图层状态"><svg><use href="#layers"/></svg></button>
    </div>
    <div class="bar bar-props">
      <div class="combo code w128"><i class="swatch"></i><select aria-label="颜色"><option>ByLayer</option></select></div>
      <i class="sep"></i>
      <div class="combo code w136"><i class="stroke long"></i><select aria-label="线型"><option>ByLayer</option></select></div>
      <i class="sep"></i>
      <div class="combo code w106"><i class="stroke"></i><select aria-label="线宽"><option>ByLayer</option></select></div>
      <i class="sep"></i>
      <div class="combo code w103"><select aria-label="打印样式"><option>BYCOLOR</option></select></div>
    </div>
  </div>
  <div class="row">
    <div class="bar bar-model">
      <button class="tool" aria-label="多段体"><svg><use href="#polysolid"/></svg></button>
      <button class="tool" aria-label="长方体"><svg><use href="#box"/></svg></button>
      <button class="tool" aria-label="楔体"><svg><use href="#wedge"/></svg></button>
      <button class="tool" aria-label="圆锥体"><svg><use href="#cone"/></svg></button>
      <button class="tool" aria-label="球体"><svg><use href="#sphere"/></svg></button>
      <button class="tool" aria-label="圆柱体"><svg><use href="#cylinder"/></svg></button>
      <button class="tool" aria-label="圆环体"><svg><use href="#torus"/></svg></button>
      <button class="tool" aria-label="棱锥体"><svg><use href="#pyramid"/></svg></button>
      <button class="tool" aria-label="螺旋"><svg><use href="#helix"/></svg></button>
      <button class="tool" aria-label="平面曲面"><svg><use href="#plane"/></svg></button>
      <i class="sep"></i>
      <button class="tool" aria-label="拉伸"><svg><use href="#extrude"/></svg></button>
      <button class="tool" aria-label="按住并拖动"><svg><use href="#presspull"/></svg></button>
      <button class="tool" aria-label="扫掠"><svg><use href="#sweep"/></svg></button>
      <button class="tool" aria-label="旋转"><svg><use href="#revolve"/></svg></button>
      <button class="tool" aria-label="放样"><svg><use href="#loft"/></svg></button>
      <i class="sep"></i>
      <button class="tool" aria-label="并集"><svg><use href="#union"/></svg></button>
      <button class="tool" aria-label="差集"><svg><use href="#subtract"/></svg></button>
      <button class="tool" aria-label="交集"><svg><use href="#intersect"/></svg></button>
      <i class="sep"></i>
      <button class="tool" aria-label="三维移动"><svg><use href="#gizmo"/></svg></button>
      <button class="tool" aria-label="三维旋转"><svg><use href="#gizrot"/></svg></button>
      <button class="tool" aria-label="三维对齐"><svg><use href="#align3"/></svg></button>
      <button class="tool" aria-label="三维阵列"><svg><use href="#array3"/></svg></button>
    </div>
    <div class="bar bar-solid">
      <button class="tool" aria-label="并集"><svg><use href="#union"/></svg></button>
      <button class="tool" aria-label="差集"><svg><use href="#subtract"/></svg></button>
      <button class="tool" aria-label="交集"><svg><use href="#intersect"/></svg></button>
      <i class="sep"></i>
      <button class="tool" aria-label="拉伸面"><svg><use href="#plusbox"/></svg></button>
      <button class="tool" aria-label="移动面"><svg><use href="#movef"/></svg></button>
      <button class="tool" aria-label="偏移面"><svg><use href="#offsetf"/></svg></button>
      <button class="tool" aria-label="删除面"><svg><use href="#delf"/></svg></button>
      <button class="tool" aria-label="旋转面"><svg><use href="#rotf"/></svg></button>
      <button class="tool" aria-label="倾斜面"><svg><use href="#taperf"/></svg></button>
      <button class="tool" aria-label="复制面"><svg><use href="#copyf"/></svg></button>
      <button class="tool" aria-label="着色面"><svg><use href="#colorf"/></svg></button>
      <i class="sep"></i>
      <button class="tool" aria-label="圆角边"><svg><use href="#fillete"/></svg></button>
      <button class="tool" aria-label="倒角边"><svg><use href="#chamfere"/></svg></button>
      <button class="tool" aria-label="复制边"><svg><use href="#copye"/></svg></button>
      <button class="tool" aria-label="着色边"><svg><use href="#colorf"/></svg></button>
      <i class="sep"></i>
      <button class="tool" aria-label="压印"><svg><use href="#imprint"/></svg></button>
      <button class="tool" aria-label="清除"><svg><use href="#clean"/></svg></button>
      <button class="tool" aria-label="分割"><svg><use href="#separate"/></svg></button>
      <button class="tool" aria-label="抽壳"><svg><use href="#shell"/></svg></button>
      <button class="tool" aria-label="检查"><svg><use href="#check"/></svg></button>
    </div>
    <div class="bar bar-visual">
      <button class="tool" aria-label="二维线框"><svg><use href="#wf2d"/></svg></button>
      <i class="sep"></i>
      <button class="tool" aria-label="三维线框"><svg><use href="#wire"/></svg></button>
      <button class="tool" aria-label="三维隐藏"><svg><use href="#hidden"/></svg></button>
      <button class="tool" aria-label="真实"><svg><use href="#realistic"/></svg></button>
      <button class="tool" aria-label="概念"><svg><use href="#conceptual"/></svg></button>
      <i class="sep"></i>
      <button class="tool" aria-label="视觉样式管理"><svg><use href="#vsmgr"/></svg></button>
    </div>
  </div>
  <div class="row">
    <div class="bar bar-view">
      <button class="tool" aria-label="命名视图"><svg><use href="#named"/></svg></button>
      <i class="sep"></i>
      <button class="tool" aria-label="俯视"><svg><use href="#vtop"/></svg></button>
      <button class="tool" aria-label="仰视"><svg><use href="#vbottom"/></svg></button>
      <button class="tool" aria-label="左视"><svg><use href="#vleft"/></svg></button>
      <button class="tool" aria-label="右视"><svg><use href="#box"/></svg></button>
      <button class="tool" aria-label="前视"><svg><use href="#vfront"/></svg></button>
      <button class="tool" aria-label="后视"><svg><use href="#vback"/></svg></button>
      <i class="sep"></i>
      <button class="tool" aria-label="西南等轴测"><svg><use href="#iso1"/></svg></button>
      <button class="tool" aria-label="东南等轴测"><svg><use href="#iso2"/></svg></button>
      <button class="tool" aria-label="东北等轴测"><svg><use href="#iso3"/></svg></button>
      <button class="tool" aria-label="西北等轴测"><svg><use href="#iso4"/></svg></button>
      <i class="sep"></i>
      <button class="tool" aria-label="创建相机"><svg><use href="#camera"/></svg></button>
      <i class="sep"></i>
      <button class="tool" aria-label="上一视图"><svg><use href="#viewprev"/></svg></button>
      <div class="combo w118"><select aria-label="视图"><option></option></select></div>
    </div>
  </div>
</div>

<main class="workspace">
  <aside class="palette left" aria-label="绘图">
    <div class="grip"></div>
    <div class="stack draw">
      <button class="tool" aria-label="直线"><svg><use href="#line"/></svg></button>
      <button class="tool" aria-label="构造线"><svg><use href="#xline"/></svg></button>
      <button class="tool" aria-label="多段线"><svg><use href="#pline"/></svg></button>
      <button class="tool" aria-label="多边形"><svg><use href="#polygon"/></svg></button>
      <button class="tool" aria-label="矩形"><svg><use href="#rect"/></svg></button>
      <button class="tool" aria-label="圆弧"><svg><use href="#arc"/></svg></button>
      <button class="tool" aria-label="圆"><svg><use href="#circle"/></svg></button>
      <button class="tool" aria-label="修订云线"><svg><use href="#cloud"/></svg></button>
      <button class="tool" aria-label="样条曲线"><svg><use href="#spline"/></svg></button>
      <button class="tool" aria-label="椭圆"><svg><use href="#ellipse"/></svg></button>
      <button class="tool" aria-label="椭圆弧"><svg><use href="#earc"/></svg></button>
      <button class="tool" aria-label="插入块"><svg><use href="#insert"/></svg></button>
      <button class="tool" aria-label="创建块"><svg><use href="#mkblock"/></svg></button>
      <button class="tool" aria-label="点"><svg><use href="#point"/></svg></button>
      <button class="tool" aria-label="图案填充"><svg><use href="#hatch"/></svg></button>
      <button class="tool" aria-label="渐变色"><svg><use href="#gradient"/></svg></button>
      <button class="tool" aria-label="面域"><svg><use href="#region"/></svg></button>
      <button class="tool" aria-label="表格"><svg><use href="#table"/></svg></button>
      <button class="tool" aria-label="多行文字"><svg><use href="#mtext"/></svg></button>
      <button class="tool" aria-label="添加选定对象"><svg><use href="#addsel"/></svg></button>
    </div>
  </aside>

  <section class="viewport" aria-label="绘图区">
    <svg class="drawing" viewBox="25 133 1024 473" preserveAspectRatio="xMidYMid slice" aria-hidden="true">
      <defs><linearGradient id="cap" x1="0" y1="0" x2="1" y2="0.300"><stop offset="0" stop-color="#bababa"/><stop offset="0.450" stop-color="#939393"/><stop offset="0.650" stop-color="#aaaaaa"/><stop offset="1" stop-color="#4a4a4a"/></linearGradient></defs>
      <path class="axis-b" d="M25 153L812 606"/>
      <path class="axis-r" d="M167 606L987 133"/>
      <path class="axis-g" d="M489 133V606"/>
      <path class="face-top" d="M323 450L615 280Q634 269 642 270L660 285L340 462z"/>
      <path class="face-cap" d="M615 280Q634 269 642 270Q650 270 671 283L664 290H633z"/>
      <path class="face-left" d="M323 450L341 460V566L323 556z"/>
      <path class="face-front" d="M340 460L637 289Q652 280 658 280Q673 281 674 292Q674 304 665 319L640 348L547 424L523 437L503 449L489 453L453 467L404 494L385 517L370 548L340 566z"/>
      <path class="axis-p" d="M489 354V453"/>
      <path class="axis-c" d="M323 516L665 319"/>
      <path class="axis-y" d="M433 388L505 429"/>
      <path class="arrow" d="M483 421L604 477M589 460L604 477L581 478"/>
    </svg>
    <p class="view-label">[−][西南等轴测][真实]</p>
    <div class="viewcube">
      <svg viewBox="920 160 120 105" aria-hidden="true">
        <ellipse class="ring" cx="980" cy="224" rx="47" ry="29"/>
        <text class="compass" x="948" y="205" transform="rotate(25 948 200)">北</text>
        <text class="compass" x="1014" y="205" transform="rotate(-25 1014 200)">东</text>
        <text class="compass big" x="941" y="249" transform="rotate(-35 941 244)">西</text>
        <text class="compass big" x="1021" y="249" transform="rotate(35 1021 244)">南</text>
        <path class="cube-top" d="M980 169L1009 184L980 199L951 184z"/>
        <path class="cube-left" d="M951 184L980 199V234L953 217z"/>
        <path class="cube-right" d="M1009 184L980 199V234L1007 216z"/>
        <text class="cube-text" x="980" y="190" transform="rotate(-30 980 184)">后</text>
        <text class="cube-text" x="966" y="215" transform="rotate(25 966 209)">左</text>
        <text class="cube-text" x="995" y="214" transform="rotate(-20 995 208)">上</text>
      </svg>
      <button class="ucs">未命名 <span>▽</span></button>
    </div>
  </section>

  <div class="scroll">
    <button class="up" aria-label="向上滚动"><i class="caret"></i></button>
    <div class="thumb"></div>
  </div>

  <div class="palette right">
    <div class="grip"></div>
    <div class="stack modify">
      <button class="tool" aria-label="删除"><svg><use href="#erase"/></svg></button>
      <button class="tool" aria-label="复制"><svg><use href="#copyobj"/></svg></button>
      <button class="tool" aria-label="镜像"><svg><use href="#mirror"/></svg></button>
      <button class="tool" aria-label="偏移"><svg><use href="#offset"/></svg></button>
      <button class="tool" aria-label="阵列"><svg><use href="#array"/></svg></button>
      <button class="tool" aria-label="移动"><svg><use href="#move"/></svg></button>
      <button class="tool" aria-label="旋转"><svg><use href="#rotate"/></svg></button>
      <button class="tool" aria-label="缩放"><svg><use href="#scale"/></svg></button>
      <button class="tool" aria-label="拉伸"><svg><use href="#stretch"/></svg></button>
      <button class="tool" aria-label="修剪"><svg><use href="#trim"/></svg></button>
      <button class="tool" aria-label="延伸"><svg><use href="#extend"/></svg></button>
      <button class="tool" aria-label="打断于点"><svg><use href="#breakpt"/></svg></button>
      <button class="tool" aria-label="打断"><svg><use href="#break"/></svg></button>
      <button class="tool" aria-label="合并"><svg><use href="#join"/></svg></button>
      <button class="tool" aria-label="倒角"><svg><use href="#chamfer"/></svg></button>
      <button class="tool" aria-label="圆角"><svg><use href="#fillet"/></svg></button>
      <button class="tool" aria-label="光顺曲线"><svg><use href="#blend"/></svg></button>
      <button class="tool" aria-label="分解"><svg><use href="#explode"/></svg></button>
    </div>
    <div class="grip second"></div>
    <div class="stack order">
      <button class="tool" aria-label="前置"><svg><use href="#front"/></svg></button>
      <button class="tool" aria-label="后置"><svg><use href="#back"/></svg></button>
      <button class="tool" aria-label="置于对象之上"><svg><use href="#above"/></svg></button>
      <button class="tool" aria-label="置于对象之下"><svg><use href="#under"/></svg></button>
      <i class="hsep"></i>
      <button class="tool" aria-label="注释前置"><svg><use href="#abctext"/></svg></button>
      <button class="tool" aria-label="填充后置"><svg><use href="#hatchback"/></svg></button>
    </div>
  </div>
</main>
</div>
</body>
</html>
```
FILE: styles.css
```css
* { box-sizing: border-box; }

body {
  margin: 0;
  background: #edf4fc;
  color: #666;
  font: 11px/16px "Open Sans", "Noto Sans CJK SC", sans-serif;
}

button {
  margin: 0;
  padding: 0;
  border: 0;
  background: none;
  color: inherit;
  font: inherit;
}

.sprite { position: absolute; width: 0; height: 0; }

.app {
  display: flex;
  flex-direction: column;
  min-height: 100vh;
  margin-right: 5px;
  background: #686868;
}

.grow { flex: 1; }

/* icons */
.tool { flex: none; width: 16px; height: 16px; }
.tool svg, .ic {
  display: block;
  flex: none;
  width: 16px;
  height: 16px;
  fill: none;
  stroke: #5b626a;
  stroke-width: 1;
}
.ic.mini { width: 13px; height: 13px; }
.dim { opacity: 0.5; }
.w { fill: #f2f5f8; }
.g { fill: #a9b0b7; }
.d { fill: #5a626b; }
.k { fill: #33383d; stroke: none; }
.n { stroke: none; }
.t { stroke-width: 1.5; }
.t2 { stroke: #3c4147; stroke-width: 2; }
.thin { stroke-width: 0.6; }
.b { fill: #b9e0f6; stroke: #3a82b8; }
.bk { fill: #1f63a3; stroke: none; }
.nb { stroke: #2a7fd0; }
.red { stroke: #d42a20; }
.grn { stroke: #3c9a3c; }
.rd { fill: #cf3a22; stroke: none; }
.gn { fill: #4fa83c; stroke: none; }
.or { fill: #ec8a2a; stroke: none; }
.br { fill: #9a5730; stroke: #7a3d1a; stroke-width: 0.5; }
.tan { fill: #c9ab82; }
.yl { fill: #f7cf55; stroke: #a8842a; stroke-width: 0.7; }
.rb { fill: #1c6cc0; stroke: none; }
.hi { fill: #6fb2ec; stroke: none; }
.cp { fill: #4b3a8c; stroke: none; }
.co { fill: #e08a2c; stroke: none; }
.hy { fill: #fbe08a; stroke: none; }
.ex { fill: #24479c; stroke: none; }
.ex2 { stroke: #24479c; stroke-width: 2; }
.wt { stroke: #fff; stroke-width: 1.5; }

/* header */
.header {
  display: flex;
  background: linear-gradient(#a6a6a6, #8a8a8a 19px, #6e6e6e 20px, #8a8a8a 21px, #5e5e5e);
}
.logo {
  flex: none;
  width: 34px;
  height: 34px;
  border: 1px solid #5a5a5a;
  background: linear-gradient(#aaa, #777);
}
.logo svg { display: block; width: 32px; height: 32px; }
.logo-dark { fill: #7e1213; }
.logo-red { fill: #e32b2b; }
.logo-lite { fill: #b31d1f; }
.logo-arrow { fill: #333; }
.header-main { flex: 1; min-width: 0; }
.titlebar { display: flex; height: 20px; padding-left: 6px; }
.quick {
  display: flex;
  flex: 0 0 188px;
  align-items: center;
  justify-content: space-between;
  margin-right: 4px;
}
.dot {
  width: 4px;
  border: 2px solid transparent;
  border-top-color: #555;
  border-bottom: 0;
}
.caret {
  display: block;
  border: 4px solid transparent;
  border-top-color: #222;
  border-bottom: 0;
}
.more {
  display: flex;
  flex: none;
  width: 14px;
  align-items: center;
  justify-content: center;
}
.side { width: 13px; }
.side .caret { border: 4px solid transparent; border-left: 5px solid #111; border-right: 0; }
.aero {
  background:
    radial-gradient(ellipse 24px 8px at 16% 70%, #eaf3fb 40%, transparent),
    radial-gradient(ellipse 24px 7px at 92% 85%, #e4f0ea 30%, transparent),
    linear-gradient(90deg, #bfd8ef, #4b8acb 14%, #3b7cc0 45%, #6fa3d4 70%, #3672b4);
}
.title {
  display: flex;
  flex: 1 1 208px;
  gap: 14px;
  align-items: center;
  margin: 0;
  padding-left: 25px;
  color: #111;
  font-size: 11px;
  font-weight: 400;
  white-space: nowrap;
}
.search {
  flex: 0 0 152px;
  width: 152px;
  padding: 0 3px;
  border: 1px solid #888;
  background: #f4f4f4;
  font: italic 10px/16px "Open Sans", "Noto Sans CJK SC", sans-serif;
}
.search::placeholder { color: #666; }
.info {
  display: flex;
  flex: 0 0 216px;
  gap: 4px;
  align-items: center;
  padding: 0 5px 0 3px;
}
.login { display: flex; gap: 2px; align-items: center; color: #eee; }
.line { width: 1px; height: 14px; margin: 0 4px; background: #777; }
.window.aero {
  display: flex;
  flex: 0 0 104px;
  gap: 6px;
  padding-left: 18px;
  background:
    radial-gradient(ellipse 16px 7px at 4% 75%, #eaf3fb 40%, transparent),
    radial-gradient(ellipse 20px 8px at 62% 90%, #b8d3c4 20%, transparent),
    linear-gradient(90deg, #4b86c4, #2f68a8);
}
.win { flex: none; width: 16px; height: 14px; }
.win.wide { margin-left: 11px; }
.win svg { display: block; width: 16px; height: 14px; fill: #fff; stroke: #456; stroke-width: 0.5; }

.menubar {
  display: flex;
  gap: 19px;
  align-items: center;
  height: 18px;
  padding: 0 2px 0 14px;
}
.menubar a { color: #f2f2f2; text-decoration: none; white-space: nowrap; }
.docs { display: flex; gap: 3px; }
.doc { width: 12px; height: 12px; }
.doc svg { display: block; width: 12px; height: 12px; fill: #222; }

/* toolbars */
.toolbars { display: flex; flex-direction: column; gap: 4px; padding-bottom: 5px; }
.row { display: flex; height: 19px; }
.bar {
  display: flex;
  flex: none;
  align-items: center;
  justify-content: space-between;
  padding: 0 2px 0 8px;
  background:
    repeating-linear-gradient(transparent 0 1px, #4c4c4c 1px 2px) 2px 2px / 4px 15px no-repeat,
    linear-gradient(#6e6e6e, #6e6e6e) 0 0 / 8px 100% no-repeat,
    linear-gradient(#f5f5f5, #e6e6e6);
}
.bar-std { width: 551px; }
.bar-styles { width: 512px; padding: 0 0 0 9px; }
.bar-ws { width: 196px; }
.bar-layer { width: 343px; }
.bar-props { width: 499px; padding: 0 0 0 8px; }
.bar-model { width: 454px; }
.bar-solid { width: 417px; padding-left: 10px; }
.bar-visual { width: 136px; padding-left: 10px; }
.bar-view { width: 402px; padding-right: 0; }
.sep { width: 1px; height: 15px; background: #8a8a8a; }

.combo {
  display: flex;
  flex: none;
  gap: 2px;
  align-items: center;
  height: 19px;
  padding: 0 4px;
  border: 1px solid #a8a8a8;
  background: #f5f5f5;
}
.combo::after {
  content: "";
  flex: none;
  border: 4px solid transparent;
  border-top-color: #999;
  border-bottom: 0;
}
.combo select {
  flex: 1;
  min-width: 0;
  padding: 0;
  border: 0;
  appearance: none;
  background: none;
  color: #707070;
  font: inherit;
}
.combo.pad { padding-left: 15px; }
.combo.layer { gap: 1px; padding-left: 1px; }
.w103 { width: 103px; }
.w106 { width: 106px; }
.w118 { width: 118px; }
.w128 { width: 128px; }
.w136 { width: 136px; }
.w148 { width: 148px; }
.w256 { width: 256px; }
.combo.code select { color: #444; font: 9px/16px "Liberation Mono", monospace; }
.combo.code { padding-left: 2px; }
.bar-props .combo:last-child { padding-left: 7px; }
.title-combo { width: 154px; height: 20px; padding-left: 1px; background: #c4c4c4; }
.title-combo::after { border-top-color: #444; }
.swatch { flex: none; width: 9px; height: 9px; margin: 0 2px; border: 1px solid #222; background: #fff; }
.stroke { flex: none; width: 30px; height: 1px; margin-right: 2px; background: #333; }
.stroke.long { width: 52px; }

/* workspace */
.workspace { display: flex; flex: 1; }
.palette { flex: none; width: 20px; }
.grip {
  height: 7px;
  background:
    repeating-linear-gradient(90deg, transparent 0 1px, #333 1px 2px) 3px 2px / 13px 3px no-repeat,
    #6e6e6e;
}
.grip.second { height: 9px; }
.stack {
  display: flex;
  flex-direction: column;
  align-items: center;
  justify-content: space-between;
  padding: 1px 0;
  background: #efefef;
}
.left .stack { padding-right: 2px; }
.draw { height: 376px; }
.modify { height: 339px; }
.order { height: 115px; }
.hsep { width: 16px; height: 1px; background: #999; }
.palette.right { width: 19px; margin: 0 4px 0 5px; }

.viewport {
  position: relative;
  flex: 1;
  min-width: 0;
  margin: 2px 0 0 4px;
  border-left: 1px solid #a0a0a0;
  background: #212830;
}
.drawing { position: absolute; inset: 0; width: 100%; height: 100%; fill: none; }
.axis-b { stroke: #6f6fd8; }
.axis-r { stroke: #d07878; }
.axis-g { stroke: #5fbf68; stroke-width: 1.5; }
.axis-p { stroke: #d57fd8; }
.axis-c { stroke: #6ff0cf; }
.axis-y { stroke: #e4e870; }
.face-top { fill: #bababa; }
.face-cap { fill: url(#cap); }
.face-left { fill: #9a9a9a; }
.face-front { fill: #a9a9a9; }
.arrow { stroke: #f00; stroke-width: 4; stroke-linecap: round; stroke-linejoin: round; }

.view-label {
  position: absolute;
  top: 2px;
  left: 4px;
  margin: 0;
  color: #e2e2e2;
  font-size: 10px;
}
.viewcube {
  position: absolute;
  top: 27px;
  right: 9px;
  display: flex;
  flex-direction: column;
  align-items: center;
  gap: 9px;
  width: 120px;
}
.viewcube svg { display: block; width: 120px; height: 105px; }
.ring { fill: none; stroke: #41474f; stroke-width: 11; }
.compass { fill: #a4a8ac; font-size: 12px; text-anchor: middle; }
.compass.big { font-size: 15px; }
.cube-top, .cube-left, .cube-right { stroke: #55585c; }
.cube-top { fill: #bfc1c4; }
.cube-left { fill: #b0b3b6; }
.cube-right { fill: #b9bcbf; }
.cube-text { fill: #4a4d52; font-size: 16px; text-anchor: middle; }
.ucs {
  padding: 0 5px;
  border: 1px solid #8c909b;
  border-radius: 3px;
  background: #a7abb6;
  color: #6d717c;
  font-size: 9px;
  line-height: 12px;
}

.scroll { flex: none; width: 16px; margin-top: 2px; background: #f0f0f0; }
.up { display: flex; width: 16px; height: 15px; align-items: center; justify-content: center; }
.up .caret { border: 3px solid transparent; border-bottom: 4px solid #444; border-top: 0; }
.thumb { width: 13px; height: 13px; margin-left: 1px; border: 1px solid #999; border-radius: 1px; background: linear-gradient(#fafafa, #d4d4d4); }
```
